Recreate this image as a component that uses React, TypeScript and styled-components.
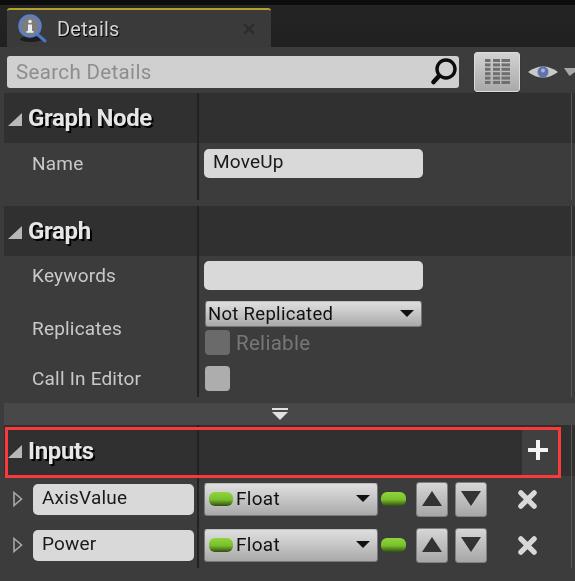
import styled, { createGlobalStyle, css } from "styled-components";

const GlobalStyle = createGlobalStyle`
  html, body {
    margin: 0;
    padding: 0;
    background: #3b3b3b;
  }
`;

const Page = styled.div`
  width: 575px;
  height: 581px;
  overflow: hidden;
  display: flex;
  flex-direction: column;
  background: #3c3c3c;
  font-family: Roboto, "Liberation Sans", sans-serif;
  filter: blur(0.5px);
`;

const TabBar = styled.div`
  height: 47px;
  box-sizing: border-box;
  padding: 8px 0 0 7px;
  background: linear-gradient(#0c0c0c 0, #0c0c0c 5px, #242424 5px, #202020 100%);
`;

const Tab = styled.div`
  width: 264px;
  height: 39px;
  box-sizing: border-box;
  display: flex;
  align-items: center;
  padding: 0 16px 0 11px;
  background: #3a3a3a;
  border-top: 2px solid #b5a12a;
  border-radius: 3px 3px 0 0;
`;

const TabTitle = styled.span`
  flex: 1;
  margin-left: 9px;
  font-size: 20px;
  letter-spacing: 0.2px;
  color: #d4d4d4;
  text-shadow: 1px 1px 0 #000;
`;

const Toolbar = styled.div`
  height: 46px;
  box-sizing: border-box;
  display: flex;
  align-items: center;
  padding: 4px 0 0 7px;
`;

const SearchBox = styled.div`
  width: 452px;
  height: 32px;
  box-sizing: border-box;
  display: flex;
  align-items: center;
  justify-content: space-between;
  padding: 0 0 0 9px;
  background: #d0d0d0;
  border-radius: 3px;
  font-size: 20.5px;
  letter-spacing: 0.35px;
  color: #8d8d8d;
`;

const GridButton = styled.div`
  width: 46px;
  height: 40px;
  box-sizing: border-box;
  margin-left: 15px;
  display: flex;
  align-items: center;
  justify-content: center;
  background: linear-gradient(#d2d2d2, #a9a9a9);
  border: 1px solid #dcdcdc;
  border-radius: 3px;
  box-shadow: 0 1px 1px #222;
`;

const columnLines = css`
  background-image: linear-gradient(#222222, #222222), linear-gradient(#585858, #585858);
  background-size: 2px 100%, 1px 100%;
  background-position: 193px 0, 567px 0;
  background-repeat: no-repeat;
`;

const Panel = styled.div`
  padding-left: 4px;
  display: flex;
  flex-direction: column;
`;

const SectionHeader = styled.div<{ $height?: number; $gap?: number }>`
  position: relative;
  height: ${(p) => p.$height ?? 50}px;
  margin-top: ${(p) => p.$gap ?? 0}px;
  display: flex;
  align-items: center;
  background-color: #303030;
  ${columnLines}
`;

const SectionTitle = styled.span`
  margin-left: 5px;
  font-size: 24px;
  font-weight: 700;
  letter-spacing: -0.35px;
  color: #e6e6e6;
  text-shadow: 2px 2px 0 #000;
`;

const Body = styled.div<{ $pad?: number }>`
  padding-bottom: ${(p) => p.$pad ?? 0}px;
  ${columnLines}
`;

const Row = styled.div<{ $height: number }>`
  height: ${(p) => p.$height}px;
  display: grid;
  grid-template-columns: 194px 1fr;
  align-items: center;
`;

const Label = styled.div`
  padding-left: 28px;
  font-size: 19px;
  letter-spacing: 0.2px;
  color: #c9c9c9;
`;

const Value = styled.div`
  padding-left: 6px;
  display: flex;
  flex-direction: column;
  gap: 3px;
`;

const TextField = styled.div<{ $width: number; $height: number }>`
  width: ${(p) => p.$width}px;
  height: ${(p) => p.$height}px;
  box-sizing: border-box;
  display: flex;
  align-items: center;
  padding: 0 0 3px 9px;
  background: #d9d9d9;
  border-radius: 5px;
  font-size: 19px;
  letter-spacing: 0.2px;
  color: #1a1a1a;
`;

const Select = styled.div<{ $width: number; $height: number }>`
  width: ${(p) => p.$width}px;
  height: ${(p) => p.$height}px;
  box-sizing: border-box;
  margin-left: 1px;
  display: flex;
  align-items: center;
  justify-content: space-between;
  padding: 0 7px 1px 2px;
  background: linear-gradient(#dedede, #d0d0d0 30%, #a9a9a9);
  border: 1px solid #777;
  border-top-color: #bdbdbd;
  border-radius: 3px;
  font-size: 18.5px;
  letter-spacing: 0.3px;
  color: #111;
`;

const SelectLabel = styled.span`
  display: flex;
  align-items: center;
  gap: 3px;
  padding-left: 2px;
  font-size: 19px;
`;

const Caret = styled.span`
  width: 0;
  height: 0;
  border-left: 7px solid transparent;
  border-right: 7px solid transparent;
  border-top: 7px solid #111;
`;

const CheckRow = styled.div`
  display: flex;
  align-items: center;
  margin-left: 1px;
  gap: 6px;
  font-size: 20.5px;
  letter-spacing: 0.3px;
  color: #777;
`;

const CheckBox = styled.div<{ $disabled?: boolean }>`
  width: 25px;
  height: 25px;
  background: ${(p) => (p.$disabled ? "#6a6a6a" : "#adadad")};
  border-radius: 4px;
`;

const Expander = styled.div`
  height: 22px;
  margin: 6px 0 0 0;
  display: flex;
  align-items: center;
  justify-content: center;
  padding-right: 19px;
  background: #484848;
  box-sizing: border-box;
`;

const AddButton = styled.div`
  position: absolute;
  top: 4px;
  bottom: 0;
  left: 518px;
  width: 36px;
  box-sizing: border-box;
  display: flex;
  align-items: center;
  justify-content: center;
  padding: 0 4px 5px 0;
  background: #404040;
`;

const Highlight = styled.div`
  position: absolute;
  left: 1px;
  top: 2px;
  width: 556px;
  height: 51px;
  box-sizing: border-box;
  border: 3px solid #fa3a3a;
  pointer-events: none;
`;

const InputName = styled.div`
  display: flex;
  align-items: center;
  padding-left: 9px;
  gap: 10px;
`;

const InputControls = styled.div`
  display: flex;
  align-items: center;
  padding-left: 5px;
`;

const Pill = styled.span<{ $width: number; $height: number }>`
  display: inline-block;
  width: ${(p) => p.$width}px;
  height: ${(p) => p.$height}px;
  background: linear-gradient(#8fd63a, #79bf2c 55%, #2f4d12);
  border-radius: 6px;
`;

const OutPin = styled(Pill)`
  margin-left: 3px;
`;

const MoveButton = styled.div<{ $first?: boolean }>`
  width: 32px;
  height: 35px;
  box-sizing: border-box;
  margin-left: ${(p) => (p.$first ? 10 : 7)}px;
  display: flex;
  align-items: center;
  justify-content: center;
  background: linear-gradient(#d6d6d6, #a6a6a6);
  border: 1px solid #808080;
  border-radius: 3px;
`;

const Remove = styled.div`
  margin-left: 31px;
  display: flex;
`;

const InfoIcon = () => (
  <svg width="30" height="30" viewBox="0 0 30 30">
    <ellipse cx="13" cy="25" rx="11" ry="3" fill="#1d1d1d" />
    <line x1="19" y1="20" x2="27" y2="27" stroke="#4a78c8" strokeWidth="3" strokeLinecap="round" />
    <circle cx="12" cy="12" r="10.5" fill="#7d7d80" stroke="#5b7fc6" strokeWidth="2.5" />
    <circle cx="12" cy="7.5" r="1.8" fill="#eee" />
    <rect x="10" y="10.5" width="4" height="7.5" fill="#eee" />
    <rect x="8.5" y="17" width="7" height="1.8" fill="#eee" />
  </svg>
);

const CloseIcon = ({ size, color, width }: { size: number; color: string; width: number }) => (
  <svg width={size} height={size} viewBox="0 0 20 20">
    <path d="M3 3 L17 17 M17 3 L3 17" stroke={color} strokeWidth={width} strokeLinecap="round" />
  </svg>
);

const SearchIcon = () => (
  <svg width="30" height="30" viewBox="0 0 30 30">
    <circle cx="17" cy="12" r="9" fill="none" stroke="#0c0c0c" strokeWidth="3.4" />
    <line x1="10" y1="19" x2="4.5" y2="25" stroke="#0c0c0c" strokeWidth="4.6" strokeLinecap="round" />
  </svg>
);

const GridIcon = () => (
  <svg width="25" height="26" viewBox="0 0 25 26">
    {[0, 1, 2, 3, 4, 5].map((r) => (
      <g key={r} fill="#6f6f6f">
        <rect x="0" y={r * 4.4} width="5.5" height="3" />
        <rect x="8" y={r * 4.4} width="7" height="3" />
        <rect x="16.5" y={r * 4.4} width="8.5" height="3" />
      </g>
    ))}
  </svg>
);

const EyeIcon = () => (
  <svg width="47" height="20" viewBox="0 0 47 20" style={{ marginLeft: 8 }}>
    <path d="M0 10 Q15 -1 30 10 Q15 21 0 10 Z" fill="#c9c9c9" />
    <circle cx="15" cy="10" r="5.5" fill="#5f73ad" />
    <circle cx="15" cy="8.5" r="2" fill="#a9b4d4" />
    <path d="M36 6 H47 V10 L41.5 14 L36 6 Z" fill="#a8a8a8" />
  </svg>
);

const CollapseArrow = () => (
  <svg width="15" height="15" viewBox="0 0 15 15" style={{ marginLeft: 4, marginTop: 2 }}>
    <path d="M14 1 V14 H0 Z" fill="#b8b8b8" />
  </svg>
);

const ExpandArrow = () => (
  <svg width="10" height="16" viewBox="0 0 10 16">
    <path d="M1 1.5 L8.5 8 L1 14.5 Z" fill="none" stroke="#a8a8a8" strokeWidth="1.6" />
  </svg>
);

const inputs = ["AxisValue", "Power"];

const App: React.FC = () => {
  return (
    <Page>
      <GlobalStyle />
      <TabBar>
        <Tab>
          <InfoIcon />
          <TabTitle>Details</TabTitle>
          <CloseIcon size={12} color="#2c2c2c" width={4} />
        </Tab>
      </TabBar>
      <Toolbar>
        <SearchBox>
          Search Details
          <SearchIcon />
        </SearchBox>
        <GridButton>
          <GridIcon />
        </GridButton>
        <EyeIcon />
      </Toolbar>
      <Panel>
        <SectionHeader>
          <CollapseArrow />
          <SectionTitle>Graph Node</SectionTitle>
        </SectionHeader>
        <Body $pad={17}>
          <Row $height={40}>
            <Label>Name</Label>
            <Value>
              <TextField $width={219} $height={29}>MoveUp</TextField>
            </Value>
          </Row>
        </Body>
        <SectionHeader $gap={6}>
          <CollapseArrow />
          <SectionTitle>Graph</SectionTitle>
        </SectionHeader>
        <Body $pad={2}>
          <Row $height={38}>
            <Label>Keywords</Label>
            <Value>
              <TextField $width={219} $height={29} />
            </Value>
          </Row>
          <Row $height={68}>
            <Label>Replicates</Label>
            <Value>
              <Select $width={217} $height={26}>
                Not Replicated
                <Caret />
              </Select>
              <CheckRow>
                <CheckBox $disabled />
                Reliable
              </CheckRow>
            </Value>
          </Row>
          <Row $height={33}>
            <Label>Call In Editor</Label>
            <Value>
              <CheckRow>
                <CheckBox />
              </CheckRow>
            </Value>
          </Row>
        </Body>
        <Expander>
          <svg width="16" height="13" viewBox="0 0 16 13">
            <rect x="0" y="0" width="16" height="2" fill="#e2e2e2" />
            <path d="M0 4 H16 L8 12 Z" fill="#e2e2e2" />
          </svg>
        </Expander>
        <SectionHeader $height={51}>
          <CollapseArrow />
          <SectionTitle>Inputs</SectionTitle>
          <AddButton>
            <svg width="20" height="20" viewBox="0 0 20 20">
              <path d="M10 1 V19 M1 10 H19" stroke="#f4f4f4" strokeWidth="4" strokeLinecap="round" />
            </svg>
          </AddButton>
          <Highlight />
        </SectionHeader>
        <Body>
          {inputs.map((name) => (
            <Row key={name} $height={46}>
              <InputName>
                <ExpandArrow />
                <TextField $width={161} $height={31}>{name}</TextField>
              </InputName>
              <InputControls>
                <Select $width={174} $height={33}>
                  <SelectLabel>
                    <Pill $width={24} $height={14} />
                    Float
                  </SelectLabel>
                  <Caret />
                </Select>
                <OutPin $width={25} $height={14} />
                <MoveButton $first>
                  <svg width="22" height="16" viewBox="0 0 22 16">
                    <path d="M11 0 L21 15 H1 Z" fill="#333" />
                  </svg>
                </MoveButton>
                <MoveButton>
                  <svg width="22" height="16" viewBox="0 0 22 16">
                    <path d="M1 0 H21 L11 15 Z" fill="#333" />
                  </svg>
                </MoveButton>
                <Remove>
                  <CloseIcon size={19} color="#d8d8d8" width={5.5} />
                </Remove>
              </InputControls>
            </Row>
          ))}
        </Body>
      </Panel>
    </Page>
  );
};

export default App;
